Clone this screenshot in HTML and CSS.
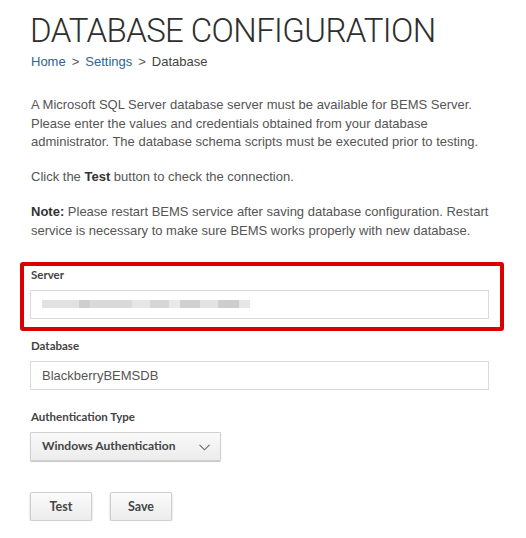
FILE: index.html
```html
<!DOCTYPE html>
<html lang="en">
<head>
<meta charset="utf-8">
<title>Database Configuration</title>
<link rel="stylesheet" href="styles.css">
</head>
<body>
<main class="page">
  <h1 class="title">DATABASE CONFIGURATION</h1>
  <nav class="crumbs">
    <a href="#">Home</a><span class="sep">&gt;</span><a href="#">Settings</a><span class="sep">&gt;</span><span class="current">Database</span>
  </nav>

  <p class="text">A Microsoft SQL Server database server must be available for BEMS Server. Please enter the values and credentials obtained from your database administrator. The database schema scripts must be executed prior to testing.</p>
  <p class="text">Click the <b>Test</b> button to check the connection.</p>
  <p class="text"><b>Note:</b> Please restart BEMS service after saving database configuration. Restart service is necessary to make sure BEMS works properly with new database.</p>

  <div class="field field-marked">
    <label class="label">Server</label>
    <div class="input"><span class="redacted" aria-label="redacted server name"></span></div>
  </div>

  <div class="field">
    <label class="label">Database</label>
    <div class="input">BlackberryBEMSDB</div>
  </div>

  <div class="field">
    <label class="label">Authentication Type</label>
    <div class="select">
      <span>Windows Authentication</span>
      <svg class="chev" width="11" height="7" viewBox="0 0 11 7"><polyline points="0.5,0.8 5.5,5.8 10.5,0.8" fill="none" stroke="#6a6a6a" stroke-width="1.1"/></svg>
    </div>
  </div>

  <div class="actions">
    <button class="btn">Test</button>
    <button class="btn">Save</button>
  </div>
</main>
</body>
</html>
```

FILE: styles.css
```css
html, body {
  margin: 0;
  padding: 0;
  background: #ffffff;
}

.page {
  width: 459px;
  padding: 11px 0 0 30px;
  font-family: "Liberation Sans", Arial, sans-serif;
  color: #555555;
}

.title {
  margin: 0;
  font-family: Roboto, "Liberation Sans", sans-serif;
  font-weight: 300;
  font-size: 33px;
  line-height: 40px;
  color: #2e2e2e;
  letter-spacing: -0.6px;
  white-space: nowrap;
}

.crumbs {
  font-size: 13px;
  line-height: 18px;
  color: #444444;
  margin: 2px 0 25px 1px;
}

.crumbs a {
  color: #2f6391;
  text-decoration: none;
}

.crumbs .sep {
  color: #555555;
  margin: 0 6px;
}

.crumbs .current {
  color: #444444;
}

.text {
  margin: 0 0 16.5px 1px;
  font-size: 13px;
  line-height: 18.5px;
  color: #555555;
}

.text b {
  color: #333333;
}

.text:last-of-type {
  margin-bottom: 28px;
}

.field {
  margin-bottom: 20px;
}

.field-marked {
  position: relative;
}

.field-marked::after {
  content: "";
  position: absolute;
  top: -6px;
  left: -10px;
  right: -15px;
  bottom: -12px;
  border: 4px solid #d90000;
  border-radius: 3px;
  pointer-events: none;
}

.label {
  display: block;
  font-family: Lato, "Liberation Sans", sans-serif;
  font-weight: 700;
  font-size: 11.5px;
  line-height: 14px;
  color: #444444;
  margin: 0 0 8px 1px;
}

.input {
  box-sizing: border-box;
  width: 100%;
  height: 29px;
  border: 1px solid #dadada;
  padding: 0 11px;
  display: flex;
  align-items: center;
  font-size: 13px;
  color: #555555;
  background: #ffffff;
}

.redacted {
  display: block;
  width: 208px;
  height: 8px;
  margin-top: -2px;
  background: linear-gradient(90deg,
    #e2e2e2 0px, #e2e2e2 37px,
    #cfcfcf 37px, #cfcfcf 48px,
    #d9d9d9 48px, #d9d9d9 90px,
    #e6e6e6 90px, #e6e6e6 108px,
    #d6d6d6 108px, #d6d6d6 127px,
    #e8e8e8 127px, #e8e8e8 138px,
    #d0d0d0 138px, #d0d0d0 158px,
    #e4e4e4 158px, #e4e4e4 176px,
    #cdcdcd 176px, #cdcdcd 197px,
    #e6e6e6 197px, #e6e6e6 208px);
}

.select {
  box-sizing: border-box;
  width: 191px;
  height: 29px;
  padding: 0 10px 0 11px;
  display: flex;
  align-items: center;
  justify-content: space-between;
  border: 1px solid #cfcfcf;
  border-radius: 1px;
  background: linear-gradient(#f9f9f9, #ececec);
  box-shadow: 0 1px 1px rgba(0, 0, 0, 0.22);
  font-family: Lato, "Liberation Sans", sans-serif;
  font-weight: 700;
  font-size: 12px;
  color: #444444;
}

.select span {
  margin-top: -2px;
}

.chev {
  display: block;
  margin-top: 1px;
}

.actions {
  display: flex;
  gap: 18px;
  margin-top: 31px;
}

.btn {
  box-sizing: border-box;
  width: 62px;
  height: 29px;
  padding: 0;
  border: 1px solid #cfcfcf;
  border-radius: 2px;
  background: linear-gradient(#fbfbfb, #ececec);
  box-shadow: 0 1px 2px rgba(0, 0, 0, 0.25);
  font-family: Lato, "Liberation Sans", sans-serif;
  font-weight: 700;
  font-size: 12.5px;
  color: #454545;
  cursor: pointer;
}
```
